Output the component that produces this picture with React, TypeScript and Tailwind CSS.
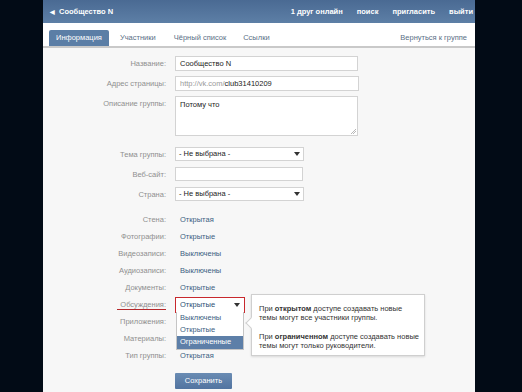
const labelCls = "w-[123px] shrink-0 text-right text-[#8f8f8f]";

const FieldRow = ({ label, h, mt, children }: { label: string; h: string; mt: string; children: React.ReactNode }) => (
  <div className={`flex ${mt}`}>
    <div className={`${labelCls} pt-[4px]`}>{label}</div>
    <div className={`ml-[9px] ${h}`}>{children}</div>
  </div>
);

const Caret = () => (
  <svg width="6" height="4" viewBox="0 0 6 4" className="shrink-0">
    <path d="M0 0h6L3 4z" fill="#333" />
  </svg>
);

const TextRow = ({ label, value }: { label: string; value: string }) => (
  <div className="flex h-[17px] items-center">
    <div className={labelCls}>{label}</div>
    <div className="ml-[14px] text-[#3b5e82]">{value}</div>
  </div>
);

export default function App() {
  return (
    <div className="w-[522px] h-[392px] bg-[#020b16] pl-[43px] overflow-hidden font-['Liberation_Sans',sans-serif] text-[7.5px] leading-none">
      <div className="w-[432px] h-[392px] bg-[#f7f7f7] flex flex-col">
        <div className="h-[23px] bg-gradient-to-b from-[#4a6a93] to-[#5d7fa6] flex items-center text-white font-bold pl-[7px] pr-[2px]">
          <span className="text-[6px] mr-[4px]">◀</span>
          <span>Сообщество N</span>
          <div className="ml-auto flex gap-[14px]">
            <span>1 друг онлайн</span>
            <span>поиск</span>
            <span>пригласить</span>
            <span>выйти</span>
          </div>
        </div>
        <div className="h-[25px] bg-white border-b-2 border-[#c9c9c9] flex items-end px-[6px]">
          <div className="h-[16px] px-[7px] flex items-center bg-[#5b7ea6] text-white rounded-t-[2px]">Информация</div>
          <div className="h-[16px] flex items-center ml-[11px] text-[#5a6f86]">Участники</div>
          <div className="h-[16px] flex items-center ml-[18px] text-[#5a6f86]">Чёрный список</div>
          <div className="h-[16px] flex items-center ml-[17px] text-[#5a6f86]">Ссылки</div>
          <div className="h-[16px] flex items-center ml-auto mr-[2px] text-[#5a6f86]">Вернуться к группе</div>
        </div>

        <div className="relative flex flex-col">
          <FieldRow label="Название:" h="h-[15px]" mt="mt-[8px]">
            <div className="w-[183px] h-[15px] bg-white border border-[#d3d3d3] flex items-center px-[4px] text-[#222]">Сообщество N</div>
          </FieldRow>
          <FieldRow label="Адрес страницы:" h="h-[15px]" mt="mt-[5px]">
            <div className="w-[184px] h-[15px] bg-white border border-[#d3d3d3] flex items-center px-[4px] text-[#999]">
              http://vk.com/<span className="text-[#222]">club31410209</span>
            </div>
          </FieldRow>
          <FieldRow label="Описание группы:" h="h-[40px]" mt="mt-[5px]">
            <div className="relative w-[183px] h-[40px] bg-white border border-[#d3d3d3] px-[4px] pt-[4px] text-[#222]">
              Потому что
              <svg width="5" height="5" viewBox="0 0 5 5" className="absolute right-[1px] bottom-[1px]">
                <path d="M5 0L0 5M5 2L2 5" stroke="#999" strokeWidth="0.7" />
              </svg>
            </div>
          </FieldRow>
          <FieldRow label="Тема группы:" h="h-[14px]" mt="mt-[11px]">
            <div className="w-[129px] h-[14px] bg-white border border-[#d3d3d3] flex items-center justify-between px-[3px] text-[#222]">
              <span>- Не выбрана -</span>
              <Caret />
            </div>
          </FieldRow>
          <FieldRow label="Веб-сайт:" h="h-[14px]" mt="mt-[6px]">
            <div className="w-[128px] h-[14px] bg-white border border-[#d3d3d3]" />
          </FieldRow>
          <FieldRow label="Страна:" h="h-[14px]" mt="mt-[6px]">
            <div className="w-[129px] h-[14px] bg-white border border-[#d3d3d3] flex items-center justify-between px-[3px] text-[#222]">
              <span>- Не выбрана -</span>
              <Caret />
            </div>
          </FieldRow>

          <div className="mt-[10px] flex flex-col">
            <TextRow label="Стена:" value="Открытая" />
            <TextRow label="Фотографии:" value="Открытые" />
            <TextRow label="Видеозаписи:" value="Выключены" />
            <TextRow label="Аудиозаписи:" value="Выключены" />
            <TextRow label="Документы:" value="Открытые" />
            <div className="relative flex h-[17px] items-center">
              <div className={labelCls}>Обсуждения:</div>
              <div className="absolute left-[74px] top-[13px] w-[49px] h-[1px] bg-[#b5282c]" />
              <div className="relative ml-[9px]">
                <div className="w-[70px] h-[16px] bg-white border border-[#c8282d] flex items-center justify-between pl-[4px] pr-[4px] text-[#2b4f74]">
                  <span>Открытые</span>
                  <Caret />
                </div>
                <div className="absolute left-[1px] top-[15px] w-[68px] bg-white border border-[#c5c5c5] border-t-0 flex flex-col text-[#3b5e82]">
                  <div className="h-[12px] flex items-center px-[3px]">Выключены</div>
                  <div className="h-[12px] flex items-center px-[3px]">Открытые</div>
                  <div className="h-[13px] flex items-center px-[3px] bg-[#5d7fa8] text-white">Ограниченные</div>
                </div>
              </div>
              <div className="absolute left-[208px] top-[-2px] w-[174px] h-[62px] bg-white border border-[#cfcfcf] shadow-[0_1px_2px_rgba(0,0,0,0.12)] px-[7px] pt-[9px] text-[7.5px] leading-[9px] text-[#333] whitespace-nowrap">
                <div className="absolute left-[-5px] top-[24px] w-[8px] h-[8px] bg-white border-l border-b border-[#cfcfcf] rotate-45" />
                <div>При <b>открытом</b> доступе создавать новые</div>
                <div>темы могут все участники группы.</div>
                <div className="mt-[10px]">При <b>ограниченном</b> доступе создавать новые</div>
                <div>темы могут только руководители.</div>
              </div>
            </div>
            <TextRow label="Приложения:" value="" />
            <TextRow label="Материалы:" value="" />
            <TextRow label="Тип группы:" value="Открытая" />
          </div>

          <div className="mt-[9px] ml-[132px]">
            <div className="w-[57px] h-[16px] bg-gradient-to-b from-[#6a8cb3] to-[#5274a0] text-white flex items-center justify-center rounded-[1px]">Сохранить</div>
          </div>
        </div>
      </div>
    </div>
  );
}
